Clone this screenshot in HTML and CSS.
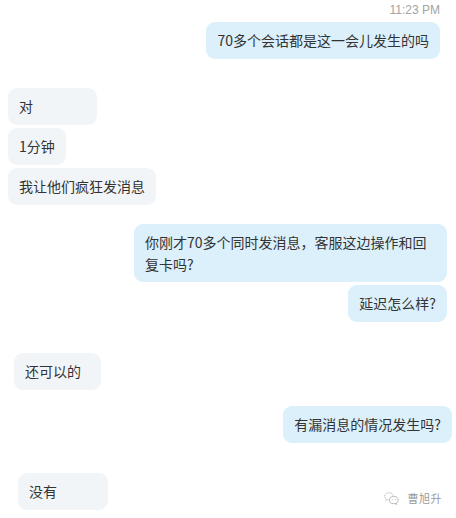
FILE: index.html
```html
<!DOCTYPE html>
<html lang="zh">

<head>
    <meta charset="UTF-8" />
    <title>聊天记录</title>
    <link rel="stylesheet" href="styles.css">
</head>

<body>

    <div class="chat">
        <div class="time">11:23 PM</div>

        <div class="msg out r16">70多个会话都是这一会儿发生的吗</div>

        <div class="msg in l8 w89 gap-lg">对</div>
        <div class="msg in l8">1分钟</div>
        <div class="msg in l8">我让他们疯狂发消息</div>

        <div class="msg out r9 wide gap-md">你刚才70多个同时发消息，客服这边操作和回复卡吗?</div>
        <div class="msg out r9">延迟怎么样?</div>

        <div class="msg in l14 w87 gap-xl">还可以的</div>

        <div class="msg out r4 gap-md2">有漏消息的情况发生吗?</div>

        <div class="msg in l18 w90 gap-xl2">没有</div>
    </div>

    <!-- 水印 -->
    <div class="mark">
        <svg width="15" height="13" viewBox="0 0 15 13" fill="none" stroke="#b4b4b4" stroke-width="0.9">
            <path d="M9.2 3.6C8.6 1.8 6.8 0.7 4.9 0.7 2.5 0.7 0.6 2.3 0.6 4.3c0 1.1 0.6 2.1 1.6 2.8l-0.4 1.3 1.5-0.8c0.5 0.1 1 0.2 1.5 0.2" stroke-dasharray="1.6 0.9" />
            <ellipse cx="9.8" cy="8.1" rx="4.4" ry="3.6" />
            <path d="M12.3 11.3l0.5 1.2-1.5-0.7" />
            <circle cx="8.3" cy="7.4" r="0.5" fill="#b4b4b4" stroke="none" />
            <circle cx="11.3" cy="7.4" r="0.5" fill="#b4b4b4" stroke="none" />
        </svg>
        <span>曹旭升</span>
    </div>

</body>

</html>
```

FILE: styles.css
```css
body {
    margin: 0;
    background: #fff;
    font-family: 'Noto Sans CJK SC', 'Noto Sans', sans-serif;
    color: #333;
    position: relative;
    height: 518px;
    overflow: hidden;
}

.chat {
    display: flex;
    flex-direction: column;
    gap: 3px;
    padding-top: 2px;
}

.time {
    align-self: flex-end;
    margin-right: 16px;
    margin-bottom: 1px;
    font-family: 'Liberation Sans', sans-serif;
    font-size: 12px;
    line-height: 16px;
    color: #a3a3a3;
}

.msg {
    font-size: 14px;
    line-height: 21px;
    padding: 8px 11px;
    border-radius: 9px;
    box-sizing: border-box;
}

.in {
    align-self: flex-start;
    background: #f2f5f8;
}

.out {
    align-self: flex-end;
    background: #dbf0fa;
}

.wide {
    width: 313px;
    line-height: 22px;
    padding-top: 7px;
    padding-bottom: 7px;
}

/* 左右边距 */
.l8 { margin-left: 8px; }
.l14 { margin-left: 14px; }
.l18 { margin-left: 18px; }
.r4 { margin-right: 4px; }
.r9 { margin-right: 9px; }
.r16 { margin-right: 16px; }

.w87 { min-width: 87px; }
.w89 { min-width: 89px; }
.w90 { min-width: 90px; }

/* 分组间距 */
.gap-lg { margin-top: 26px; }
.gap-md { margin-top: 16px; }
.gap-md2 { margin-top: 13px; }
.gap-xl { margin-top: 28px; }
.gap-xl2 { margin-top: 27px; }

.mark {
    position: absolute;
    right: 14px;
    bottom: 12px;
    display: flex;
    align-items: center;
    gap: 9px;
    font-size: 11px;
    letter-spacing: 0.5px;
    color: #9a9a9a;
}
```
